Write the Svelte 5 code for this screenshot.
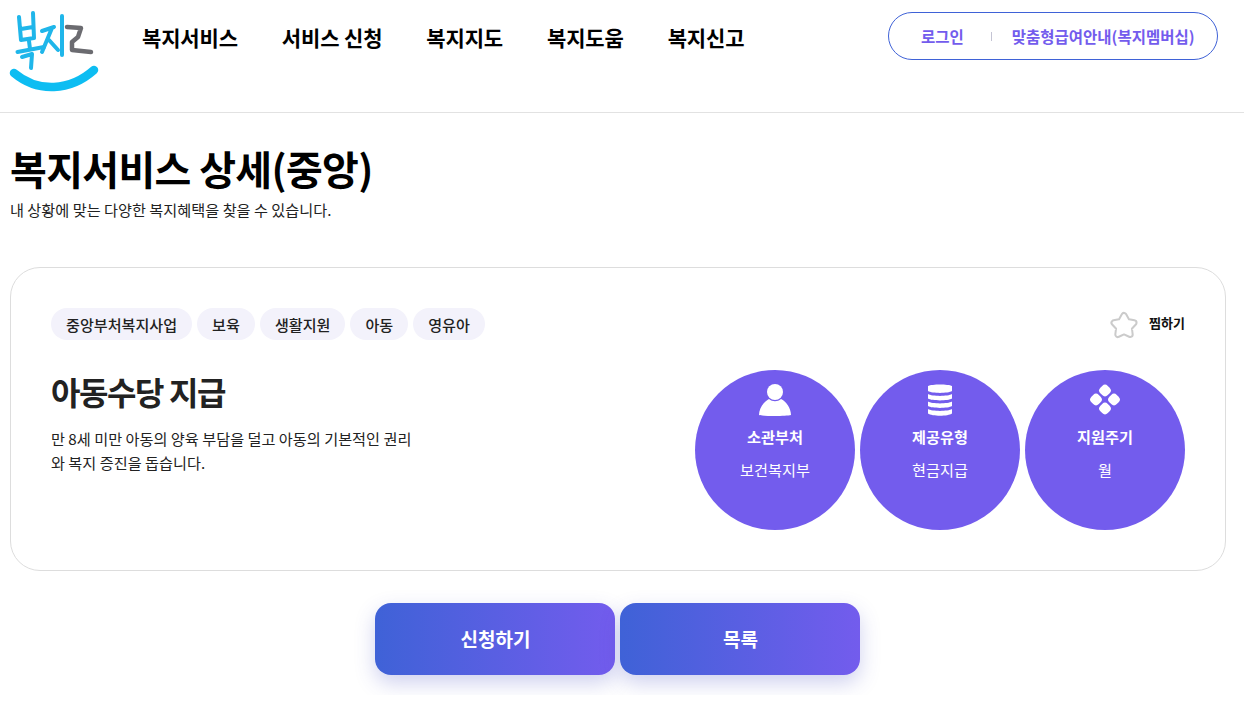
<script>
  const nav = ["복지서비스", "서비스 신청", "복지지도", "복지도움", "복지신고"];
  const tags = ["중앙부처복지사업", "보육", "생활지원", "아동", "영유아"];
  const infos = [
    { key: "person", title: "소관부처", value: "보건복지부" },
    { key: "data", title: "제공유형", value: "현금지급" },
    { key: "cycle", title: "지원주기", value: "월" }
  ];
  const starPoints = "15,4.500 18.290,10.470 25,11.760 20.330,16.730 21.170,23.500 15,20.600 8.830,23.500 9.670,16.730 5,11.760 11.710,10.470";
</script>

<header class="header">
  <a class="logo" href="#top" aria-label="복지로">
    <svg width="100" height="100" viewBox="0 0 100 100" fill="none" stroke-linecap="round" stroke-linejoin="round">
      <g stroke="#1fb6ea" stroke-width="4">
        <path d="M19 17 L21 40 M33 13 L34 38 M21 29 L33 27 M21 40 L34 38" />
        <path d="M17.500 52 L44 47 M29 41 L30 49" />
        <path d="M22 57 L32 54 L31 68" />
        <path d="M42 31 L54 27 M52 28 L42 52 M49 40 L58 50" />
        <path d="M62 16 L62 55" />
      </g>
      <path d="M67 27 L81 28 L78 37 L72 42 L72 50 L91 52" stroke="#6b6b70" stroke-width="4.500" />
      <path d="M14 73 Q32 88 54 87 Q76 86 94 70" stroke="#0dbdf2" stroke-width="8.500" />
    </svg>
  </a>
  <nav class="gnb">
    {#each nav as item}
      <a href="#top">{item}</a>
    {/each}
  </nav>
  <div class="member">
    <a href="#top" class="login">로그인</a>
    <span class="bar"></span>
    <a href="#top" class="guide">맞춤형급여안내(복지멤버십)</a>
  </div>
</header>

<main class="page">
  <h1>복지서비스 상세(중앙)</h1>
  <p class="lead">내 상황에 맞는 다양한 복지혜택을 찾을 수 있습니다.</p>

  <section class="card">
    <div class="top">
      <ul class="tags">
        {#each tags as tag}
          <li>{tag}</li>
        {/each}
      </ul>
      <button class="fav">
        <svg width="30" height="28" viewBox="0 0 30 28" fill="none" stroke-linejoin="round">
          <polygon points={starPoints} stroke="#cbcbcb" stroke-width="7" fill="#cbcbcb" />
          <polygon points={starPoints} stroke="#fff" stroke-width="3" fill="#fff" />
        </svg>
        <span>찜하기</span>
      </button>
    </div>
    <div class="body">
      <div class="summary">
        <h2>아동수당 지급</h2>
        <p>만 8세 미만 아동의 양육 부담을 덜고 아동의 기본적인 권리와 복지 증진을 돕습니다.</p>
      </div>
      <div class="circles">
        {#each infos as info}
          <div class="circle">
            <svg class="icon" width="34" height="32" viewBox="0 0 34 32" fill="#fff">
              {#if info.key === "person"}
                <circle cx="17" cy="8" r="8" />
                <path d="M1 31 C1 24 6 17.500 11 15 C14.500 18 19.500 18 23 15 C28 17.500 33 24 33 31 C28 32.300 6 32.300 1 31 Z" />
              {:else if info.key === "data"}
                <path d="M5 2 C9 0 25 0 29 2 V7 C25 9.500 9 9.500 5 7 Z" />
                <path d="M5 10 C9 12.500 25 12.500 29 10 V14.500 C25 17 9 17 5 14.500 Z" />
                <path d="M5 17.500 C9 20 25 20 29 17.500 V22 C25 24.500 9 24.500 5 22 Z" />
                <path d="M5 25 C9 27.500 25 27.500 29 25 V29.500 C25 32.500 9 32.500 5 29.500 Z" />
              {:else}
                <rect x="11.750" y="1.250" width="10.500" height="10.500" rx="4" transform="rotate(45 17 6.500)" />
                <rect x="2.750" y="10.250" width="10.500" height="10.500" rx="4" transform="rotate(45 8 15.500)" />
                <rect x="20.750" y="10.250" width="10.500" height="10.500" rx="4" transform="rotate(45 26 15.500)" />
                <rect x="11.750" y="19.250" width="10.500" height="10.500" rx="4" transform="rotate(45 17 24.500)" />
              {/if}
            </svg>
            <strong>{info.title}</strong>
            <span>{info.value}</span>
          </div>
        {/each}
      </div>
    </div>
  </section>

  <div class="actions">
    <button>신청하기</button>
    <button>목록</button>
  </div>
</main>

<style>
  :global(body) {
    margin: 0;
    background: #fff;
    color: #000;
    font-family: "Noto Sans CJK KR", "Noto Sans", sans-serif;
  }
  a {
    color: inherit;
    text-decoration: none;
  }
  .header {
    display: flex;
    align-items: flex-start;
    height: 112px;
    border-bottom: 1px solid #e2e2e2;
  }
  .logo {
    display: block;
    width: 100px;
    height: 100px;
    filter: blur(0.4px);
  }
  .gnb {
    display: flex;
    gap: 44px;
    margin: 22px 0 0 42px;
    font-size: 21px;
    font-weight: 700;
    line-height: 30px;
    letter-spacing: -0.15px;
  }
  .member {
    display: flex;
    align-items: center;
    box-sizing: border-box;
    width: 330px;
    height: 48px;
    margin: 12px 26px 0 auto;
    padding: 0 0 0 32px;
    border: 1px solid #3f62d7;
    border-radius: 24px;
    color: #735ced;
    font-size: 15.500px;
    font-weight: 700;
    white-space: nowrap;
  }
  .bar {
    width: 1px;
    height: 9px;
    margin: 0 20px 0 27px;
    background: #c4c4d4;
  }
  .page {
    padding: 0 18px 20px 10px;
  }
  h1 {
    margin: 29px 0 0;
    font-size: 40px;
    font-weight: 700;
    line-height: 52px;
    letter-spacing: -0.65px;
  }
  .lead {
    margin: 5px 0 0;
    font-size: 15.200px;
    line-height: 20px;
    color: #222;
  }
  .card {
    box-sizing: border-box;
    height: 304px;
    margin-top: 48px;
    padding: 40px;
    border: 1px solid #ddd;
    border-radius: 30px;
  }
  .top {
    display: flex;
    justify-content: space-between;
    align-items: center;
  }
  .tags {
    display: flex;
    gap: 5px;
    margin: 0;
    padding: 0;
    list-style: none;
  }
  .tags li {
    padding: 0 15px;
    height: 32px;
    line-height: 32px;
    border-radius: 16px;
    background: #f3f2fb;
    color: #222;
    font-size: 15.100px;
    font-weight: 500;
  }
  .fav {
    display: flex;
    align-items: center;
    gap: 10px;
    margin-left: auto;
    padding: 0;
    border: 0;
    background: none;
    font: inherit;
    font-size: 13px;
    font-weight: 700;
    line-height: 18px;
    color: #111;
  }
  .fav svg {
    margin-top: 1px;
  }
  .fav span {
    margin-top: -2px;
  }
  .body {
    display: flex;
    justify-content: space-between;
    margin-top: 30px;
  }
  .summary {
    width: 365px;
  }
  h2 {
    margin: 0;
    font-size: 32px;
    font-weight: 700;
    line-height: 42px;
    letter-spacing: -1.4px;
    color: #222;
  }
  .summary p {
    margin: 14px 0 0;
    font-size: 15.200px;
    line-height: 24px;
    color: #222;
    word-break: break-all;
  }
  .circles {
    display: flex;
    gap: 5px;
  }
  .circle {
    display: flex;
    flex-direction: column;
    align-items: center;
    box-sizing: border-box;
    width: 160px;
    height: 160px;
    padding-top: 14px;
    border-radius: 50%;
    background: #735ced;
    color: #fff;
  }
  .circle strong {
    margin-top: 8px;
    font-size: 15.200px;
    font-weight: 700;
    line-height: 24px;
  }
  .circle span {
    margin-top: 9px;
    font-size: 15.200px;
    line-height: 24px;
  }
  .actions {
    display: flex;
    justify-content: center;
    gap: 5px;
    margin-top: 32px;
    padding-right: 1px;
  }
  .actions button {
    width: 240px;
    height: 72px;
    padding: 0 0 1px 1px;
    border: 0;
    border-radius: 16px;
    background: linear-gradient(to right, #3f62d7, #735ced);
    box-shadow: 0 8px 20px rgba(63, 70, 190, 0.25);
    color: #fff;
    font: inherit;
    font-size: 19px;
    font-weight: 700;
  }
</style>
